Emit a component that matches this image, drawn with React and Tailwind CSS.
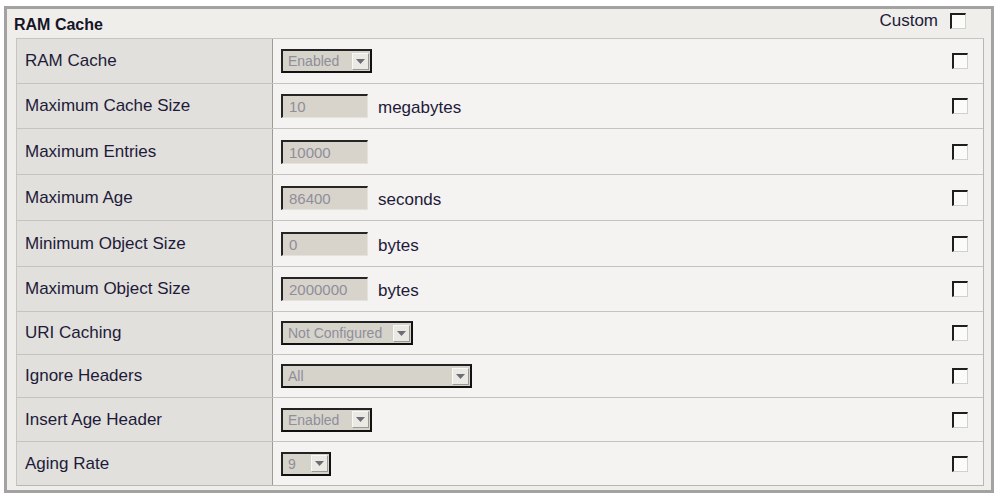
const rows = [
  { label: "RAM Cache", kind: "select", value: "Enabled", w: "w-[91px]", h: "h-[44px]" },
  { label: "Maximum Cache Size", kind: "input", value: "10", unit: "megabytes", h: "h-[45px]" },
  { label: "Maximum Entries", kind: "input", value: "10000", h: "h-[46px]" },
  { label: "Maximum Age", kind: "input", value: "86400", unit: "seconds", h: "h-[46px]" },
  { label: "Minimum Object Size", kind: "input", value: "0", unit: "bytes", h: "h-[46px]" },
  { label: "Maximum Object Size", kind: "input", value: "2000000", unit: "bytes", h: "h-[45px]" },
  { label: "URI Caching", kind: "select", value: "Not Configured", w: "w-[132px]", h: "h-[43px]" },
  { label: "Ignore Headers", kind: "select", value: "All", w: "w-[191px]", h: "h-[43px]" },
  { label: "Insert Age Header", kind: "select", value: "Enabled", w: "w-[91px]", h: "h-[44px]" },
  { label: "Aging Rate", kind: "select", value: "9", w: "w-[50px]", h: "h-[44px]" },
];

const Check = () => (
  <span className="block w-[16px] h-[16px] bg-[#fbfbf9] border-t-2 border-l-2 border-t-[#1e1e1e] border-l-[#1e1e1e] border-r border-b border-r-[#d0d0cc] border-b-[#d0d0cc]" />
);

const Select = ({ value, w }) => (
  <div className={`${w} h-[24px] flex items-center justify-between bg-[#d6d3cb] border-2 border-[#222] border-r-[#111] border-b-[#111]`}>
    <span className="pl-[5px] text-[14px] text-[#8f8e9a] leading-none">{value}</span>
    <span className="w-[17px] h-[17px] mr-[1px] flex items-center justify-center bg-[#ebe9e3] border border-[#f8f8f6] border-r-[#9a9994] border-b-[#9a9994]">
      <svg width="9" height="5" viewBox="0 0 9 5">
        <path d="M0 0h9L4.5 5z" fill="#6e6d74" />
      </svg>
    </span>
  </div>
);

const Field = ({ value }) => (
  <div className="w-[87px] h-[24px] flex items-center bg-[#d8d4cc] border-t-2 border-l-2 border-t-[#252525] border-l-[#252525] border-r border-b border-r-[#e4e2dc] border-b-[#e4e2dc]">
    <span className="pl-[6px] text-[15px] text-[#8f8e9a] leading-none">{value}</span>
  </div>
);

export default function App() {
  return (
    <div className="w-[1000px] h-[500px] bg-white pt-[6px] pl-[4px] font-['Liberation_Sans',Arial,sans-serif]">
      <div className="w-[990px] h-[487px] border-[3px] border-[#a2a2a2] bg-[#efeeea] flex flex-col">
        <div className="h-[29px] flex items-center justify-between pl-[7px] pr-[25px]">
          <span className="text-[16px] font-bold text-[#161428] pt-[2px]">RAM Cache</span>
          <div className="flex items-center gap-[12px] -mt-[6px]">
            <span className="text-[17px] text-[#1e1a3a]">Custom</span>
            <Check />
          </div>
        </div>
        <div className="ml-[9px] w-[968px] border border-[#c6c5c1] border-r-[#b8b7b3] border-b-[#b8b7b3]">
          {rows.map((r, i) => (
            <div key={i} className={`${r.h} flex ${i > 0 ? "border-t border-[#c4c3bf]" : ""}`}>
              <div className="w-[256px] shrink-0 bg-[#e1e0dc] border-r border-[#9c9b97] flex items-center pl-[8px]">
                <span className="text-[17px] text-[#1e1a3a]">{r.label}</span>
              </div>
              <div className="flex-1 bg-[#f4f3f1] flex items-center justify-between pl-[8px] pr-[15px]">
                <div className="flex items-center gap-[10px]">
                  {r.kind === "select" ? <Select value={r.value} w={r.w} /> : <Field value={r.value} />}
                  {r.unit && <span className="text-[17px] text-[#1e1a3a] mt-[4px]">{r.unit}</span>}
                </div>
                <Check />
              </div>
            </div>
          ))}
        </div>
      </div>
    </div>
  );
}
